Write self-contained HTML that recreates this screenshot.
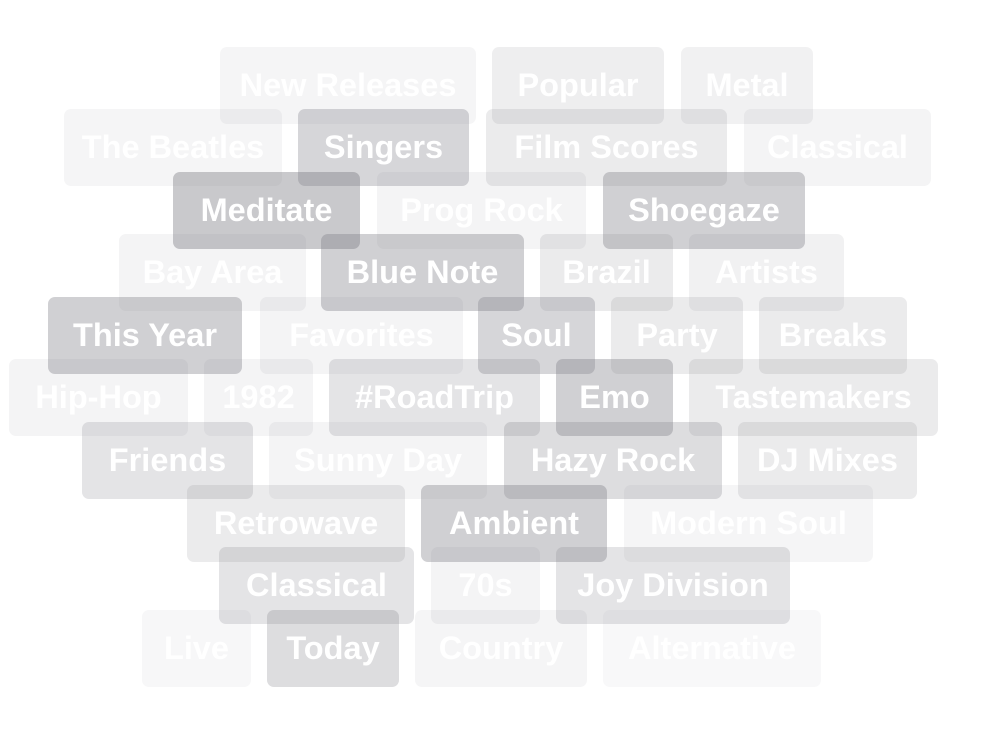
<!DOCTYPE html>
<html><head><meta charset="utf-8"><style>
html,body{margin:0;padding:0;background:#fff;width:1000px;height:750px;overflow:hidden}
.b{position:absolute;height:77px;border-radius:7px;display:flex;align-items:center;justify-content:center;color:#fff;font:bold 32.5px "Liberation Sans",Arial,sans-serif;white-space:nowrap}
</style></head><body>
<script>
const d=[
["New Releases",220,476,47,.07],["Popular",492,664,47,.13],["Metal",681,813,47,.1],
["The Beatles",64,282,109,.07],["Singers",298,469,109,.3],["Film Scores",486,727,109,.15],["Classical",744,931,109,.08],
["Meditate",173,360,172,.4],["Prog Rock",377,586,172,.08],["Shoegaze",603,805,172,.35],
["Bay Area",119,306,234,.08],["Blue Note",321,524,234,.35],["Brazil",540,673,234,.15],["Artists",689,844,234,.1],
["This Year",48,242,297,.35],["Favorites",260,463,297,.08],["Soul",478,595,297,.3],["Party",611,743,297,.15],["Breaks",759,907,297,.15],
["Hip-Hop",9,188,359,.08],["1982",204,313,359,.08],["#RoadTrip",329,540,359,.2],["Emo",556,673,359,.35],["Tastemakers",689,938,359,.15],
["Friends",82,253,422,.2],["Sunny Day",269,487,422,.08],["Hazy Rock",504,722,422,.25],["DJ Mixes",738,917,422,.15],
["Retrowave",187,405,485,.15],["Ambient",421,607,485,.35],["Modern Soul",624,873,485,.07],
["Classical",219,414,547,.2],["70s",431,540,547,.08],["Joy Division",556,790,547,.2],
["Live",142,251,610,.06],["Today",267,399,610,.25],["Country",415,587,610,.07],["Alternative",603,821,610,.05]];
for(const [t,x1,x2,y,a] of d){document.write(`<div class="b" style="left:${x1}px;width:${x2-x1}px;top:${y}px;background:rgba(120,120,128,${a})">${t}</div>`)}
</script>
</body></html>
